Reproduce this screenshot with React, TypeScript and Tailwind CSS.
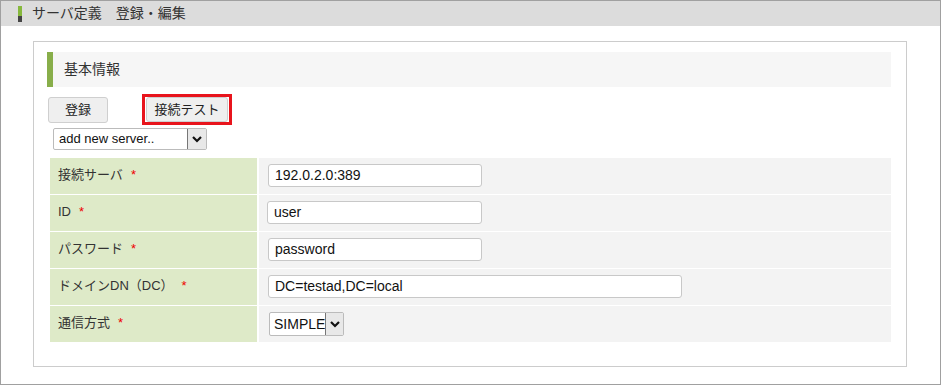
import React from "react";

const font = { fontFamily: '"Liberation Sans", Arial, "Noto Sans CJK JP", sans-serif' };

function Chevron() {
  return (
    <svg width="12" height="10" viewBox="0 0 12 10">
      <path d="M2 3 L6 7 L10 3" fill="none" stroke="#111" strokeWidth="2.2" />
    </svg>
  );
}

function Row({ label, children }: { label: string; children: React.ReactNode }) {
  return (
    <div className="flex h-[36px] mb-[1px]">
      <div className="w-[207px] bg-[#deeac8] pl-[8px] pt-[7px] text-[13px] text-[#333]">
        {label}
        <span className="text-[#e00] ml-[8px]">*</span>
      </div>
      <div className="w-[2px]" />
      <div className="flex-1 bg-[#f3f3f3] pl-[9px] pt-[6px]">{children}</div>
    </div>
  );
}

function Input({ value, w }: { value: string; w: string }) {
  return (
    <div className={`${w} h-[23px] bg-white border border-[#c8c8c8] rounded-[3px] pl-[6px] flex items-center text-[14px] text-[#111]`}>
      {value}
    </div>
  );
}

export default function App() {
  return (
    <div style={font} className="w-[941px] h-[385px] border border-[#a0a0a0] bg-white overflow-hidden">
      <div className="h-[25px] bg-[#dcdcdc] flex items-center pl-[17px]">
        <div className="flex flex-col shrink-0 w-[4px] h-[16px] mr-[10px]">
          <div className="h-[10px] shrink-0 bg-[#86b83c]" />
          <div className="h-[6px] shrink-0 bg-[#444]" />
        </div>
        <span className="text-[14px] text-[#333]">サーバ定義　登録・編集</span>
      </div>

      <div className="ml-[32px] mt-[15px] w-[874px] h-[326px] border border-[#cccccc] pt-[10px] pl-[13px] pr-[15px]">
        <div className="h-[35px] flex items-center bg-[#f6f6f6]">
          <div className="w-[6px] h-full bg-[#88ae4a]" />
          <span className="ml-[11px] text-[14px] text-[#333]">基本情報</span>
        </div>

        <div className="flex items-center mt-[7px] h-[31px]">
          <div className="ml-[1px] w-[60px] h-[26px] bg-[#efefef] border border-[#cfcfcf] rounded-[3px] flex items-center justify-center text-[13px] text-[#222]">
            登録
          </div>
          <div className="ml-[34px] border-[3px] border-[#e8141c] h-[31px] px-[1px] flex items-center">
            <div className="w-[82px] h-[25px] bg-[#efefef] border border-[#cfcfcf] rounded-[3px] flex items-center justify-center text-[13px] text-[#222]">
              接続テスト
            </div>
          </div>
        </div>

        <div className="ml-[6px] mt-[3px] w-[154px] h-[22px] bg-white border border-[#bbb] rounded-[2px] flex">
          <div className="flex-1 pl-[5px] flex items-center text-[13px] text-[#111]">add new server..</div>
          <div className="w-[19px] bg-[#e8e8e8] border-l border-[#777] flex items-center justify-center">
            <Chevron />
          </div>
        </div>

        <div className="ml-[3px] mt-[8px]">
          <Row label="接続サーバ">
            <Input value="192.0.2.0:389" w="w-[214px]" />
          </Row>
          <Row label="ID">
            <div className="-ml-[1px]">
              <Input value="user" w="w-[215px]" />
            </div>
          </Row>
          <Row label="パスワード">
            <Input value="password" w="w-[214px]" />
          </Row>
          <Row label="ドメインDN（DC）">
            <Input value="DC=testad,DC=local" w="w-[414px]" />
          </Row>
          <Row label="通信方式">
            <div className="ml-[1px] w-[75px] h-[24px] bg-white border border-[#bbb] rounded-[2px] flex">
              <div className="flex-1 pl-[4px] flex items-center text-[14px] text-[#111]">SIMPLE</div>
              <div className="w-[18px] bg-[#e8e8e8] border-l border-[#777] flex items-center justify-center">
                <Chevron />
              </div>
            </div>
          </Row>
        </div>
      </div>
    </div>
  );
}
